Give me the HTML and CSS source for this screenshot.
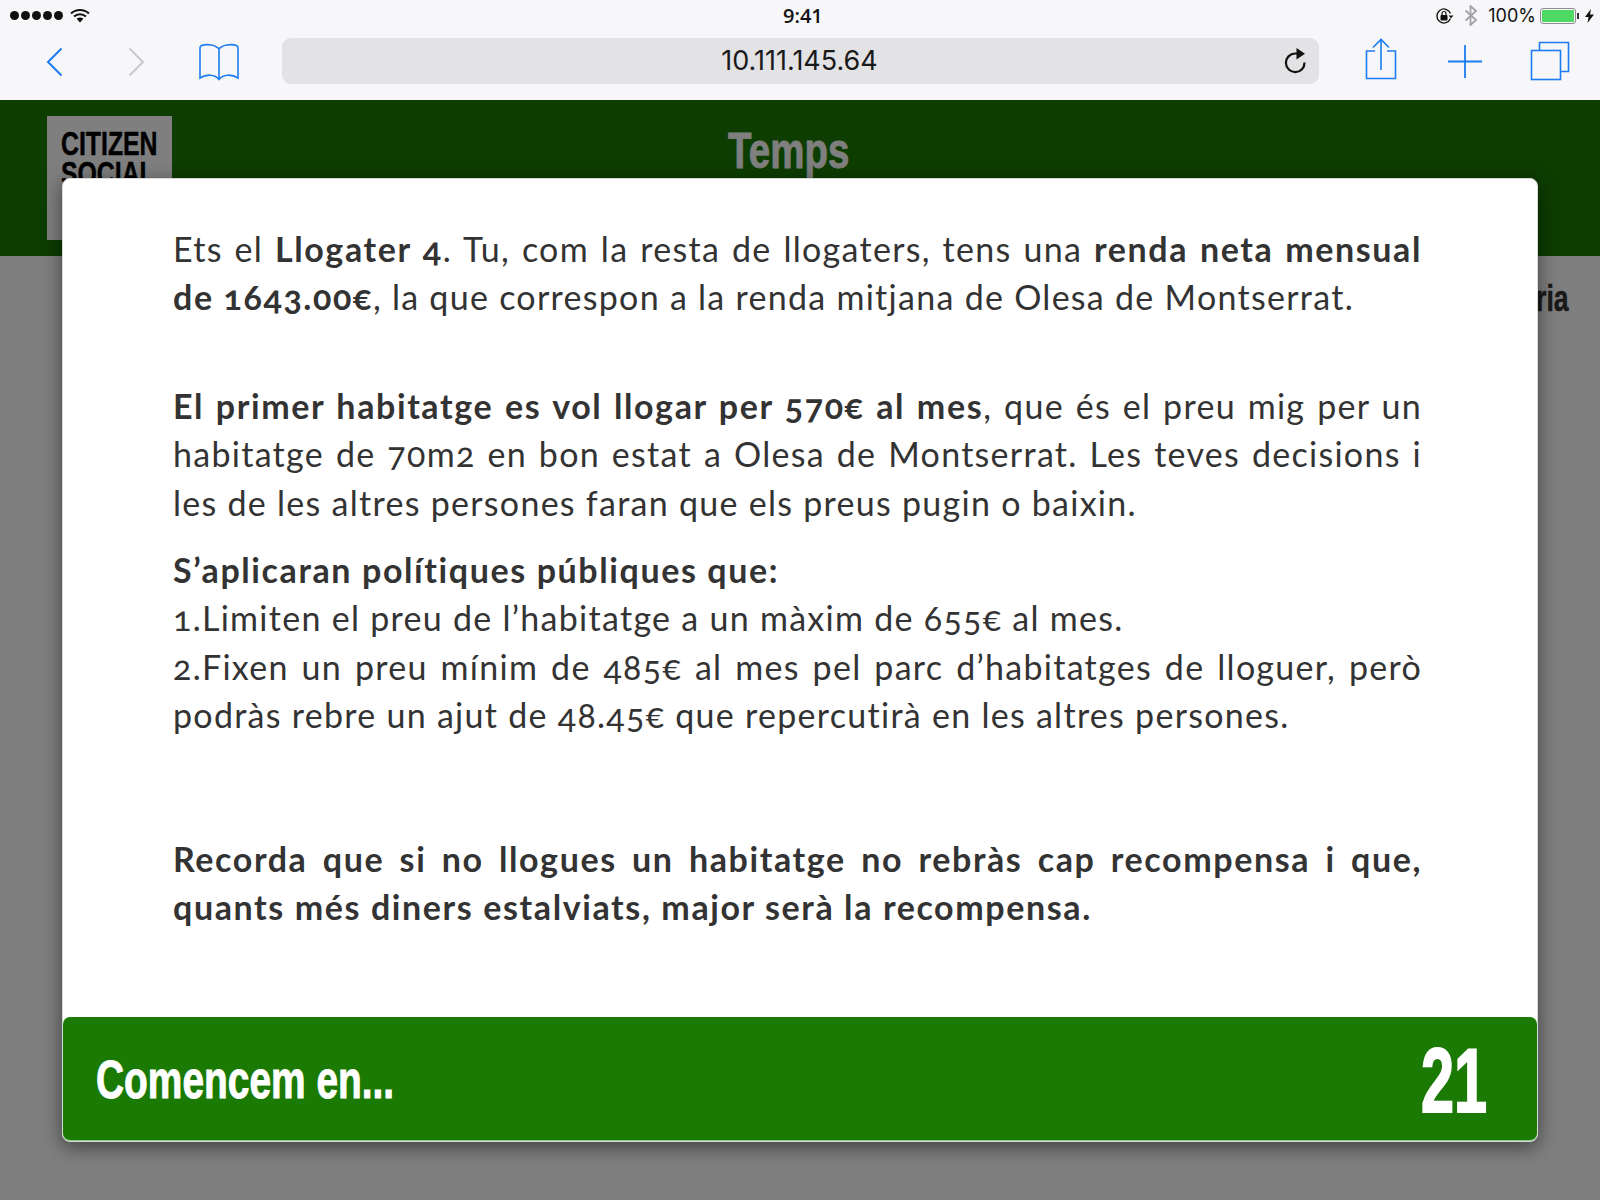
FILE: index.html
```html
<!DOCTYPE html>
<html>
<head>
  <meta charset="UTF-8">
  <title>Temps</title>
  <link rel="stylesheet" href="styles.css">
</head>
<body>
  <div class="status-bar">
    <div class="status-left">
      <div class="signal"><i></i><i></i><i></i><i></i><i></i></div>
      <svg class="wifi" width="20" height="15" viewBox="0 0 20 15">
        <path d="M1 5.500C6 .8 14 .8 19 5.500M4 8.600C7.500 5.400 12.500 5.400 16 8.600" fill="none" stroke="#111" stroke-width="2"/>
        <path d="M6.600 10.800C8.600 9.200 11.400 9.200 13.400 10.800L10 14.500Z" fill="#111"/>
      </svg>
    </div>
    <div class="status-time">9:41</div>
    <div class="status-right">
      <svg width="20" height="18" viewBox="0 0 20 18">
        <path d="M15.500 11.500A7 7 0 1 1 15.500 6.500" fill="none" stroke="#111" stroke-width="1.300"/>
        <path d="M13.500 8.500h5l-2.500 2.800Z" fill="#111"/>
        <rect x="5.500" y="8" width="7" height="5.500" rx="1" fill="#111"/>
        <path d="M7 8V6.500a2 2 0 0 1 4 0V8" fill="none" stroke="#111" stroke-width="1.200"/>
      </svg>
      <svg class="bt" width="14" height="21" viewBox="0 0 14 21">
        <path d="M1.500 5.500L12 15l-5.500 5V1L12 6 1.500 15.500" fill="none" stroke="#a3a3a5" stroke-width="1.800"/>
      </svg>
      <span class="battery-pct">100%</span>
      <div class="battery"><div class="battery-fill"></div></div>
      <div class="battery-tip"></div>
      <svg width="9" height="14" viewBox="0 0 9 14"><path d="M6 0L0 8h3.500L2.500 14 9 5.500H5Z" fill="#111"/></svg>
    </div>
  </div>

  <div class="toolbar">
    <div class="tool-left">
      <svg width="18" height="30" viewBox="0 0 18 30"><path d="M15.500 1.500L2 15l13.500 13.500" fill="none" stroke="#1c7cf2" stroke-width="2"/></svg>
      <svg class="forward" width="18" height="30" viewBox="0 0 18 30"><path d="M2.500 1.500L16 15 2.500 28.500" fill="none" stroke="#c9c9cb" stroke-width="2"/></svg>
      <svg class="book" width="40" height="38" viewBox="0 0 40 38">
        <path d="M20 6C17 2 8 .5 2.500 2.500 1.500 3 1 4 1 5V35C7 31 16 31 20 36.500 24 31 33 31 39 35V5C39 4 38.500 3 37.500 2.500 32 .5 23 2 20 6ZM20 6V35" fill="none" stroke="#1c7cf2" stroke-width="1.600"/>
      </svg>
    </div>
    <div class="url-bar">
      <span class="url-text">10.111.145.64</span>
      <svg class="reload" width="24" height="27" viewBox="0 0 24 27">
        <path d="M20.500 14.500A9.300 9.300 0 1 1 11 5.500H15" fill="none" stroke="#111" stroke-width="2.200"/>
        <path d="M12.500 0L21 5.700 12.500 11.500Z" fill="#111"/>
      </svg>
    </div>
    <div class="tool-right">
      <svg width="32" height="42" viewBox="0 0 32 42">
        <path d="M10 13H1.500V40.500H30.500V13H22M16 32V2M8 9.500L16 1.500l8 8" fill="none" stroke="#1c7cf2" stroke-width="1.600"/>
      </svg>
      <svg class="plus" width="34" height="34" viewBox="0 0 34 34"><path d="M17 0V33M0 16.500H34" fill="none" stroke="#1c7cf2" stroke-width="1.800"/></svg>
      <svg class="tabs" width="40" height="40" viewBox="0 0 40 40">
        <path d="M9.500 9V1.500H38.500V30.500H31" fill="none" stroke="#1c7cf2" stroke-width="1.600"/>
        <rect x="1.500" y="9.500" width="29" height="29" fill="none" stroke="#1c7cf2" stroke-width="1.600"/>
      </svg>
    </div>
  </div>

  <div class="page">
    <header class="page-header">
      <div class="logo">
        <span class="logo-line">CITIZEN</span>
        <span class="logo-line">SOCIAL</span>
      </div>
      <h1 class="page-title"><span>Temps</span></h1>
    </header>
    <div class="page-row"><span class="page-row-text">Categoria</span></div>

    <div class="backdrop"></div>

    <div class="modal">
      <div class="modal-body">
        <p class="para para-first">
          <span class="line">Ets el <b>Llogater 4</b>. Tu, com la resta de llogaters, tens una <b>renda neta mensual</b></span>
          <span class="line last"><b>de 1643.00€</b>, la que correspon a la renda mitjana de Olesa de Montserrat.</span>
        </p>
        <p class="para para-second">
          <span class="line"><b>El primer habitatge es vol llogar per 570€ al mes</b>, que és el preu mig per un</span>
          <span class="line">habitatge de 70m2 en bon estat a Olesa de Montserrat. Les teves decisions i</span>
          <span class="line last">les de les altres persones faran que els preus pugin o baixin.</span>
        </p>
        <p class="para para-third">
          <span class="line last"><b>S’aplicaran polítiques públiques que:</b></span>
          <span class="line last">1.Limiten el preu de l’habitatge a un màxim de 655€ al mes.</span>
          <span class="line">2.Fixen un preu mínim de 485€ al mes pel parc d’habitatges de lloguer, però</span>
          <span class="line last">podràs rebre un ajut de 48.45€ que repercutirà en les altres persones.</span>
        </p>
        <p class="para para-fourth">
          <span class="line"><b>Recorda que si no llogues un habitatge no rebràs cap recompensa i que,</b></span>
          <span class="line last"><b>quants més diners estalviats, major serà la recompensa.</b></span>
        </p>
      </div>
      <div class="modal-footer">
        <span class="footer-label">Comencem en...</span>
        <span class="footer-count">21</span>
      </div>
    </div>
  </div>
</body>
</html>
```

FILE: styles.css
```css
* {
  box-sizing: border-box;
}

html,
body {
  margin: 0;
  padding: 0;
  height: 1200px;
  overflow: hidden;
}

body {
  width: 1600px;
  background-color: #fff;
  font-family: "Liberation Sans", Arial, sans-serif;
  display: flex;
  flex-direction: column;
}

.status-bar {
  height: 32px;
  background-color: #f7f6f8;
  display: flex;
  align-items: center;
  justify-content: space-between;
  padding: 0 6px 1px 10px;
  position: relative;
  color: #111;
}

.status-left,
.status-right {
  display: flex;
  align-items: center;
}

.signal {
  display: flex;
  gap: 2px;
  margin-right: 7px;
}

.signal i {
  width: 9px;
  height: 9px;
  border-radius: 50%;
  background-color: #111;
}

.status-time {
  position: absolute;
  left: 783px;
  top: 2px;
  font-family: "Open Sans", sans-serif;
  font-size: 20px;
  font-weight: 600;
}

.status-right svg {
  display: block;
}

.bt {
  margin: 0 10px 0 9px;
}

.battery-pct {
  font-family: Inter, sans-serif;
  font-size: 18px;
  margin-right: 4px;
}

.battery {
  width: 36px;
  height: 16px;
  border: 1px solid #8e8e90;
  border-radius: 3px;
  padding: 1px;
}

.battery-fill {
  height: 100%;
  background-color: #4cd964;
  border-radius: 1px;
}

.battery-tip {
  width: 2px;
  height: 6px;
  background-color: #333;
  margin: 0 6px 0 1px;
}

.toolbar {
  height: 68px;
  background-color: #f7f6f8;
  display: flex;
  align-items: flex-start;
}

.tool-left {
  width: 282px;
  padding: 11px 0 0 46px;
  display: flex;
  align-items: center;
  flex-shrink: 0;
}

.forward {
  margin-left: 63px;
}

.book {
  margin-left: 54px;
}

.url-bar {
  width: 1037px;
  height: 46px;
  margin-top: 6px;
  background-color: #e3e3e6;
  border-radius: 9px;
  display: flex;
  align-items: center;
  justify-content: center;
  position: relative;
}

.url-text {
  font-family: Inter, sans-serif;
  font-size: 27px;
  color: #1a1a1a;
  margin: 0 0 2px -2px;
}

.reload {
  position: absolute;
  right: 11px;
  top: 10px;
}

.tool-right {
  padding: 6px 0 0 46px;
  display: flex;
  align-items: flex-start;
}

.tool-right .plus {
  margin: 7px 0 0 51px;
}

.tool-right .tabs {
  margin: 3px 0 0 48px;
}

.page {
  flex: 1;
  position: relative;
  background-color: #fff;
}

.page-header {
  height: 156px;
  background-color: #1a7a03;
  padding: 16px 0 0 47px;
  display: flex;
  position: relative;
}

.logo {
  width: 125px;
  height: 124px;
  background-color: #fff;
  color: #000;
  font-weight: bold;
  font-size: 34px;
  line-height: 30px;
  padding: 12px 0 0 14px;
  -webkit-text-stroke: 0.5px #000;
}

.logo-line {
  display: block;
  width: 160px;
  transform: scaleX(0.73);
  transform-origin: left center;
}

.page-title {
  margin: 0;
  position: absolute;
  left: 0;
  right: 0;
  top: 21px;
  text-align: center;
  color: #fff;
  font-weight: bold;
  font-size: 50px;
  line-height: 60px;
  padding-right: 22px;
  -webkit-text-stroke: 0.8px #fff;
}

.page-title span {
  display: inline-block;
  transform: scaleX(0.77);
}

.page-row {
  text-align: right;
  padding: 22px 31px 0 0;
}

.page-row-text {
  display: inline-block;
  font-weight: bold;
  font-size: 37px;
  color: #333;
  transform: scaleX(0.72);
  transform-origin: right center;
  -webkit-text-stroke: 0.5px #333;
}

.backdrop {
  position: absolute;
  inset: 0;
  background-color: rgba(0, 0, 0, 0.5);
}

.modal {
  position: absolute;
  left: 62px;
  top: 78px;
  width: 1476px;
  height: 964px;
  background-color: #fff;
  border: 1px solid #d9d9d9;
  border-radius: 8px;
  box-shadow: 0 5px 20px rgba(0, 0, 0, 0.5);
  display: flex;
  flex-direction: column;
}

.modal-body {
  flex: 1;
  padding: 46px 115px 0 110px;
  font-family: Lato, sans-serif;
  font-size: 34px;
  line-height: 48.400px;
  letter-spacing: 1.280px;
  color: #333;
  font-variant-numeric: oldstyle-nums;
}

.modal-body b {
  letter-spacing: 1.600px;
}

.para {
  margin: 0;
}

.para-second {
  margin-top: 60px;
}

.para-third {
  margin-top: 19px;
}

.para-fourth {
  margin-top: 95px;
}

.line {
  display: block;
  text-align: justify;
  text-align-last: justify;
  white-space: nowrap;
}

.line.last {
  text-align-last: left;
}

.modal-footer {
  height: 124px;
  background-color: #1a7a03;
  border-radius: 7px;
  border-bottom: 1px solid #8fc98a;
  display: flex;
  align-items: center;
  justify-content: space-between;
  padding: 0 50px 0 33px;
  color: #fff;
  font-weight: bold;
}

.footer-label {
  display: inline-block;
  font-size: 54px;
  transform: scaleX(0.72);
  transform-origin: left center;
  -webkit-text-stroke: 1px #fff;
}

.footer-count {
  display: inline-block;
  font-size: 90px;
  margin-top: 6px;
  transform: scaleX(0.66);
  transform-origin: right center;
  -webkit-text-stroke: 2px #fff;
}
```
